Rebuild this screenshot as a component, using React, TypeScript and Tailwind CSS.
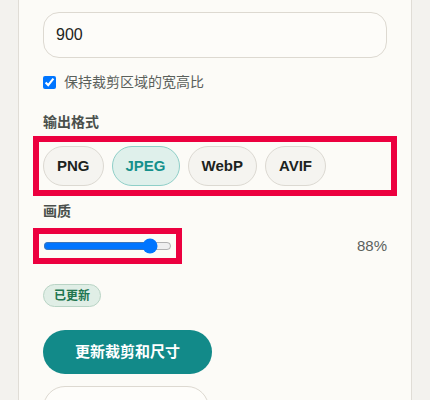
import React, { useState } from 'react';

const formats = ['PNG', 'JPEG', 'WebP', 'AVIF'];

export default function App() {
  const [height, setHeight] = useState('900');
  const [keepRatio, setKeepRatio] = useState(true);
  const [format, setFormat] = useState('JPEG');
  const [quality, setQuality] = useState(88);

  return (
    <div
      className="min-h-[400px] w-[430px] overflow-hidden bg-[#f3f2ee] px-[18px]"
      style={{ fontFamily: '"Liberation Sans", "Noto Sans CJK SC", sans-serif' }}
    >
      <div className="min-h-[400px] border-x border-[#e0ddd6] bg-[#fcfbf7] px-6 pt-3">
        {/* Height field */}
        <input
          type="text"
          value={height}
          onChange={(e) => setHeight(e.target.value)}
          className="block h-[46px] w-full rounded-2xl border border-[#ddd9d1] bg-[#fdfcf9] px-3 text-base text-[#1d2421] outline-none"
        />

        <label className="mt-[14px] flex h-5 items-center gap-2 text-sm text-[#5a605b]">
          <input
            type="checkbox"
            checked={keepRatio}
            onChange={(e) => setKeepRatio(e.target.checked)}
            className="m-0 h-[13px] w-[13px]"
          />
          保持裁剪区域的宽高比
        </label>

        {/* Output format */}
        <div className="mt-5 h-5 text-sm font-semibold leading-5 text-[#4a504c]">输出格式</div>
        <div className="mt-[14px] flex gap-2 outline-[6px] outline-offset-4 outline-rose-600 outline-solid">
          {formats.map((f) => (
            <button
              key={f}
              onClick={() => setFormat(f)}
              className={
                f === format
                  ? 'h-10 rounded-full border border-[#8fcfc8] bg-[#dff0eb] px-[13px] text-[15px] font-bold text-[#15908c]'
                  : 'h-10 rounded-full border border-[#dcd9d2] bg-[#f5f4f0] px-[13px] text-[15px] font-bold text-[#1c2320]'
              }
            >
              {f}
            </button>
          ))}
        </div>

        {/* Quality */}
        <div className="mt-[15px] h-5 text-sm font-semibold leading-5 text-[#4a504c]">画质</div>
        <div className="mt-[17px] flex h-4 items-center justify-between">
          <input
            type="range"
            min={0}
            max={100}
            value={quality}
            onChange={(e) => setQuality(Number(e.target.value))}
            className="m-0 h-4 w-[129px] outline-[6px] outline-offset-4 outline-rose-600 outline-solid"
          />
          <span className="text-[15px] text-[#5b615d]">{quality}%</span>
        </div>

        <div className="mt-[30px] flex">
          <span className="flex h-[23px] items-center rounded-full border border-[#b9d4c5] bg-[#e0eee6] px-2.5 text-xs font-bold text-[#217650]">
            已更新
          </span>
        </div>

        <button className="mt-[23px] block h-11 rounded-full bg-[#128a89] px-8 text-[15px] font-bold text-white">
          更新裁剪和尺寸
        </button>

        <button className="mt-3 block h-11 w-[166px] rounded-full border border-[#ddd9d1] bg-[#fefdfa]" />
      </div>
    </div>
  );
}
